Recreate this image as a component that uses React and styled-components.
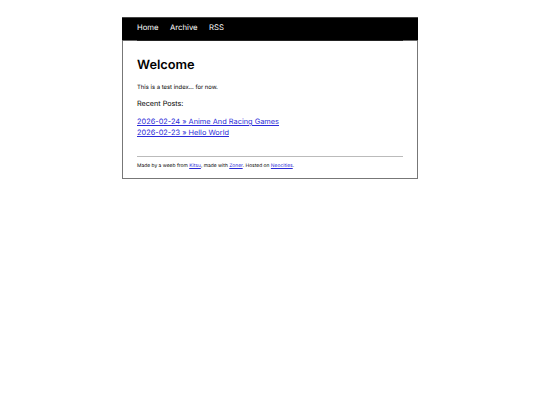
import React from "react";
import styled, { createGlobalStyle } from "styled-components";

const GlobalStyle = createGlobalStyle`
  html, body {
    margin: 0;
    padding: 0;
    background: #fff;
    color: #000;
    font-family: Inter, "Liberation Sans", sans-serif;
    text-rendering: geometricPrecision;
  }
`;

const Wrapper = styled.div`
  box-sizing: border-box;
  width: 296px;
  margin: 17px auto 0;
  border: 1px solid #777;
  border-top: 0;
`;

const Nav = styled.nav`
  display: flex;
  gap: 11.5px;
  box-sizing: border-box;
  height: 24px;
  margin: 0 -1px;
  padding: 0 15px 4px;
  align-items: center;
  background: #000;
  border-top: 1px solid #444;
  border-bottom: 1px solid #666;
`;

const NavLink = styled.a`
  color: #fff;
  font-size: 7.7px;
  font-weight: 400;
  text-decoration: none;
`;

const Main = styled.main`
  padding: 0 14px 9px;
`;

const Content = styled.div`
  border-top: 1px solid #222;
  margin-top: -1px;
  padding-top: 17px;
`;

const Title = styled.h1`
  margin: 0;
  font-size: 12.8px;
  line-height: 16px;
  font-weight: 600;
`;

const Intro = styled.p`
  margin: 9px 0 0;
  font-size: 5.9px;
  line-height: 9px;
`;

const Heading = styled.p`
  margin: 7px 0 0;
  font-size: 7.2px;
  line-height: 10px;
`;

const PostList = styled.div`
  display: flex;
  flex-direction: column;
  gap: 1px;
  margin-top: 8px;
`;

const PostLink = styled.a`
  font-size: 7.4px;
  line-height: 10px;
  color: #2a2ad8;
  text-decoration: underline;
`;

const Footer = styled.footer`
  margin-top: 18px;
  padding-top: 6px;
  border-top: 1px solid #bbb;
  font-size: 4.95px;
  line-height: 6px;
`;

const FootLink = styled.a`
  color: #2a2ad8;
  text-decoration: underline;
`;

export default function App() {
  return (
    <>
      <GlobalStyle />
      <Wrapper>
        <Nav>
          <NavLink href="#">Home</NavLink>
          <NavLink href="#">Archive</NavLink>
          <NavLink href="#">RSS</NavLink>
        </Nav>
        <Main>
          <Content>
            <Title>Welcome</Title>
            <Intro>This is a test index... for now.</Intro>
            <Heading>Recent Posts:</Heading>
            <PostList>
              <PostLink href="#">2026-02-24 » Anime And Racing Games</PostLink>
              <PostLink href="#">2026-02-23 » Hello World</PostLink>
            </PostList>
            <Footer>
              Made by a weeb from <FootLink href="#">Kitsu</FootLink>, made with{" "}
              <FootLink href="#">Zoner</FootLink>. Hosted on{" "}
              <FootLink href="#">Neocities</FootLink>.
            </Footer>
          </Content>
        </Main>
      </Wrapper>
    </>
  );
}
